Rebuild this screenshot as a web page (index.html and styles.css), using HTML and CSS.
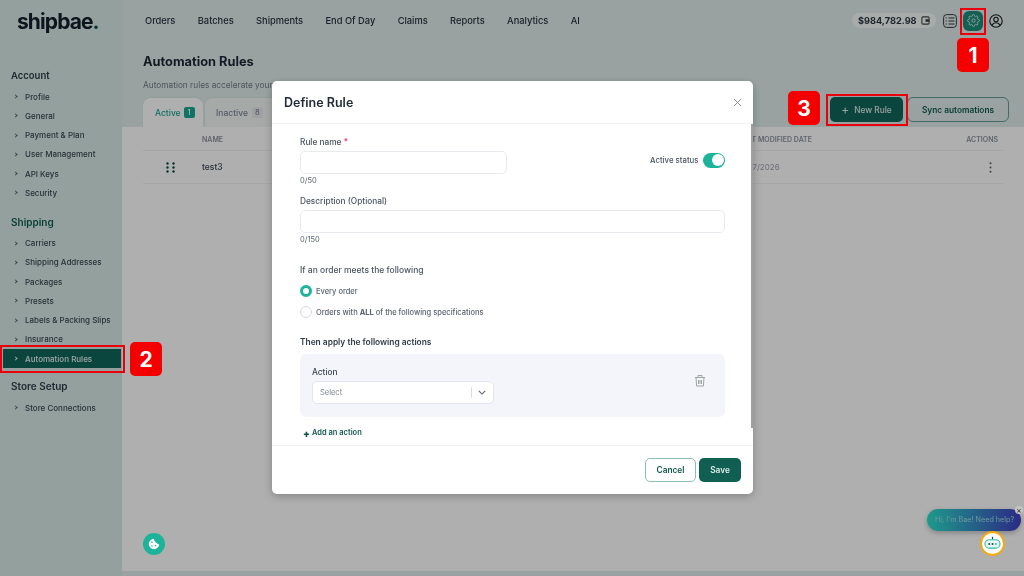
FILE: index.html
```html
<!DOCTYPE html>
<html lang="en">
<head>
<meta charset="utf-8">
<title>Automation Rules</title>
<link rel="stylesheet" href="styles.css">
</head>
<body>
<div class="app">
  <aside class="sidebar">
    <div class="logo">shipbae<span class="logo-dot">.</span></div>
    <h3 class="side-head">Account</h3>
    <ul class="side-list">
      <li><i class="chev"></i>Profile</li>
      <li><i class="chev"></i>General</li>
      <li><i class="chev"></i>Payment &amp; Plan</li>
      <li><i class="chev"></i>User Management</li>
      <li><i class="chev"></i>API Keys</li>
      <li><i class="chev"></i>Security</li>
    </ul>
    <h3 class="side-head side-head-green">Shipping</h3>
    <ul class="side-list side-list-wide">
      <li><i class="chev"></i>Carriers</li>
      <li><i class="chev"></i>Shipping Addresses</li>
      <li><i class="chev"></i>Packages</li>
      <li><i class="chev"></i>Presets</li>
      <li><i class="chev"></i>Labels &amp; Packing Slips</li>
      <li><i class="chev"></i>Insurance</li>
      <li class="active"><i class="chev"></i>Automation Rules</li>
    </ul>
    <h3 class="side-head side-head-store">Store Setup</h3>
    <ul class="side-list side-list-wide">
      <li><i class="chev"></i>Store Connections</li>
    </ul>
  </aside>
  <main class="main">
    <header class="topbar">
      <nav class="nav">
        <a>Orders</a><a>Batches</a><a>Shipments</a><a>End Of Day</a><a>Claims</a><a>Reports</a><a>Analytics</a><a>AI</a>
      </nav>
      <div class="top-right">
        <div class="balance">$984,782.98
          <svg class="wallet" viewBox="0 0 10 10" width="9" height="9"><rect x="1" y="1" width="8" height="8" rx="1.2" fill="none" stroke="#3b4444" stroke-width="1.2"/><rect x="5" y="3.5" width="4" height="3" fill="#3b4444"/></svg>
        </div>
        <svg class="list-ic" viewBox="0 0 14 14" width="14" height="14"><rect x=".6" y=".6" width="12.8" height="12.8" rx="3" fill="none" stroke="#2c3a3a"/><path d="M5.5 4h6M5.5 7h6M5.5 10h6" stroke="#2c3a3a" stroke-width="1"/><path d="M2.5 4h1.500M2.500 7h1.500M2.500 10h1.500" stroke="#b33" stroke-width="1"/></svg>
        <div class="gear-btn">
          <svg viewBox="0 0 24 24" width="13" height="13" fill="none" stroke="#d5e6e2" stroke-width="1.800" stroke-linejoin="round"><circle cx="12" cy="12" r="3"/><path d="M19.400 15a1.650 1.650 0 0 0 .33 1.820l.06.06a2 2 0 1 1-2.830 2.830l-.06-.06a1.650 1.650 0 0 0-2.800 1.170V21a2 2 0 1 1-4 0v-.09a1.650 1.650 0 0 0-2.880-1.100l-.06.06a2 2 0 1 1-2.830-2.830l.06-.06a1.650 1.650 0 0 0-1.170-2.800H3a2 2 0 1 1 0-4h.09a1.650 1.650 0 0 0 1.100-2.880l-.06-.06a2 2 0 1 1 2.830-2.830l.06.06A1.650 1.650 0 0 0 9.800 3.300V3a2 2 0 1 1 4 0v.09a1.650 1.650 0 0 0 2.800 1.170l.06-.06a2 2 0 1 1 2.830 2.830l-.06.06a1.650 1.650 0 0 0 1.170 2.800H21a2 2 0 1 1 0 4h-.09a1.650 1.650 0 0 0-1.510 1z"/></svg>
        </div>
        <svg class="user-ic" viewBox="0 0 14 14" width="14" height="14" fill="none" stroke="#141c1c" stroke-width="1.100"><circle cx="7" cy="7" r="6.200"/><circle cx="7" cy="5.500" r="2.200"/><path d="M3 11.500c.8-2 2.300-2.700 4-2.700s3.200.7 4 2.700"/></svg>
      </div>
    </header>
    <section class="page-head">
      <h1 class="title">Automation Rules</h1>
      <p class="subtitle">Automation rules accelerate your shipping workflow</p>
      <div class="tabs-row">
        <div class="tabs">
          <div class="tab tab-on">Active <span class="badge badge-on">1</span></div>
          <div class="tab">Inactive <span class="badge">8</span></div>
        </div>
        <div class="head-actions">
          <button class="btn-new"><span class="plus">+</span>New Rule</button>
          <button class="btn-sync">Sync automations</button>
        </div>
      </div>
    </section>
    <section class="table-area">
      <div class="row row-head">
        <span class="col-drag"></span>
        <span class="col-name">NAME</span>
        <span class="col-date">LAST MODIFIED DATE</span>
        <span class="col-act">ACTIONS</span>
      </div>
      <div class="row row-body">
        <span class="col-drag"><svg viewBox="0 0 9 11" width="9" height="11" fill="#0e4a44"><circle cx="1.500" cy="1.500" r="1.200"/><circle cx="7.500" cy="1.500" r="1.200"/><circle cx="1.500" cy="5.500" r="1.200"/><circle cx="7.500" cy="5.500" r="1.200"/><circle cx="1.500" cy="9.500" r="1.200"/><circle cx="7.500" cy="9.500" r="1.200"/></svg></span>
        <span class="col-name col-test">test3</span>
        <span class="col-date col-val">01/17/2026</span>
        <span class="col-act"><svg viewBox="0 0 3 11" width="3" height="11" fill="#5a6262"><circle cx="1.500" cy="1.300" r="1"/><circle cx="1.500" cy="5.500" r="1"/><circle cx="1.500" cy="9.700" r="1"/></svg></span>
      </div>
    </section>
  </main>
</div>

<div class="backdrop">
  <div class="modal">
    <div class="modal-head">
      <h2 class="modal-title">Define Rule</h2>
      <svg class="close" viewBox="0 0 10 10" width="9" height="9" fill="none" stroke="#7d8584" stroke-width="1"><path d="M1 1l8 8M9 1l-8 8"/></svg>
    </div>
    <div class="modal-body">
      <div class="name-row">
        <div class="name-col">
          <label class="lbl">Rule name <span class="req">*</span></label>
          <div class="input"></div>
          <div class="count">0/50</div>
        </div>
        <div class="status">
          <span class="lbl lbl-status">Active status</span>
          <span class="toggle"><i class="knob"></i></span>
        </div>
      </div>
      <div class="desc">
        <label class="lbl">Description (Optional)</label>
        <div class="input"></div>
        <div class="count">0/150</div>
      </div>
      <div class="q">If an order meets the following</div>
      <div class="radio-row radio-first"><i class="radio radio-on"></i>Every order</div>
      <div class="radio-row"><i class="radio"></i><span>Orders with <b>ALL</b> of the following specifications</span></div>
      <div class="q q-then">Then apply the following actions</div>
      <div class="card">
        <div class="card-left">
          <label class="lbl lbl-action">Action</label>
          <div class="select"><span class="sel-text">Select</span><i class="sel-sep"></i>
            <svg viewBox="0 0 10 6" width="8" height="5" fill="none" stroke="#56606a" stroke-width="1.300"><path d="M1 1l4 4 4-4"/></svg>
          </div>
        </div>
        <svg class="trash" viewBox="0 0 12 13" width="12" height="13" fill="none" stroke="#a0a5a5" stroke-width="1"><path d="M1 3.500h10M4 3V1.500h4V3M2 3.500l.6 8.500h6.800l.6-8.500M4.500 6v4M6 6v4M7.500 6v4"/></svg>
      </div>
      <div class="add"><b class="add-plus">+</b>Add an action</div>
    </div>
    <div class="modal-foot">
      <button class="btn-cancel">Cancel</button>
      <button class="btn-save">Save</button>
    </div>
    <div class="scroll-track"></div>
  </div>
</div>

<div class="mark mark-gear"></div>
<div class="mark mark-side"></div>
<div class="mark mark-new"></div>
<div class="num num-1">1</div>
<div class="num num-2">2</div>
<div class="num num-3">3</div>

<div class="cookie">
  <svg viewBox="0 0 12 12" width="12" height="12"><path d="M6 .8a5.200 5.200 0 1 0 5.200 5.400c-1 .2-1.900-.3-2.100-1.200-1 .1-1.900-.6-1.900-1.700C6.200 3 5.700 1.800 6 .8z" fill="#fff"/><circle cx="4" cy="4.200" r=".8" fill="#1bb39a"/><circle cx="7.500" cy="7.500" r=".8" fill="#1bb39a"/><circle cx="4" cy="8" r=".7" fill="#1bb39a"/></svg>
</div>
<div class="chat">Hi, I'm Bae! Need help?<span class="chat-x">×</span></div>
<div class="bot">
  <svg viewBox="0 0 20 18" width="17" height="15" fill="none"><path d="M10 1v3" stroke="#0e4a44" stroke-width="1.500"/><rect x="1" y="4.500" width="18" height="10" rx="5" stroke="#35b8a0" stroke-width="1.300" fill="#e6f6f3"/><circle cx="6" cy="9.500" r="1.200" fill="#0e4a44"/><circle cx="10" cy="9.500" r="1.200" fill="#0e4a44"/><circle cx="14" cy="9.500" r="1.200" fill="#35b8a0"/></svg>
</div>
</body>
</html>
```
FILE: styles.css
```css
* { box-sizing: border-box; }
html, body { margin: 0; height: 100%; overflow: hidden; }
body {
  font-family: "Inter", "Open Sans", sans-serif;
  background: #dbe9e6;
  color: #2a3440;
  font-size: 8.500px;
  filter: blur(.35px);
}
h1, h2, h3, p, ul { margin: 0; padding: 0; }
ul { list-style: none; }
button { font-family: inherit; cursor: pointer; }

.app { display: flex; width: 1024px; height: 576px; }

/* Sidebar */
.sidebar { width: 122px; flex: none; background: #d4e6e2; display: flex; flex-direction: column; }
.logo {
  font-family: "Inter", sans-serif;
  font-weight: 700; font-size: 21px; letter-spacing: -.9px;
  color: #141d2b; height: 44px; line-height: 44px; padding-left: 17px;
}
.logo-dot { color: #0e4a44; }
.side-head { font-size: 9.500px; font-weight: 600; color: #2e3a48; padding-left: 11px; line-height: 14px; margin-top: 25px; }
.side-head-green { color: #0e5a50; margin-top: 12px; font-size: 10px; }
.side-head-store { margin-top: 11px; font-size: 10px; }
.side-list { margin-top: 4px; }
.side-list-wide { margin-top: 5px; }
.side-list li { display: flex; align-items: center; height: 19.250px; padding-left: 14px; font-weight: 500; font-size: 8px; color: #3a4554; }
.chev { width: 3px; height: 3px; border-top: 1px solid #56606a; border-right: 1px solid #56606a; transform: rotate(45deg); margin-right: 8px; flex: none; }
.side-list li.active { background: #0f6459; color: #e4eeec; margin: 0 1px 0 3px; padding-left: 11px; }
.active .chev { border-color: #e4eeec; }

/* Main */
.main { flex: 1; min-width: 0; display: flex; flex-direction: column; }
.topbar { height: 41px; flex: none; display: flex; align-items: center; justify-content: space-between; padding: 0 21px 0 23px; }
.nav { display: flex; gap: 22.400px; }
.nav a { font-size: 9.300px; font-weight: 500; color: #243040; }
.top-right { display: flex; align-items: center; }
.balance {
  display: flex; align-items: center; justify-content: space-between;
  width: 84px; height: 15px; padding: 0 6px; border-radius: 8px;
  background: #eff6f5; font-weight: 700; font-size: 9.200px; color: #2a3440;
}
.list-ic { margin-left: 7px; }
.gear-btn { width: 20px; height: 20px; margin-left: 6px; border-radius: 6px; background: #1a8879; display: flex; align-items: center; justify-content: center; }
.user-ic { margin-left: 6px; }

.page-head { flex: none; height: 86px; padding: 13px 15px 0 21px; }
.title { font-size: 12.800px; font-weight: 700; color: #1c2636; line-height: 16px; }
.subtitle { font-size: 8.300px; color: #6e7a88; margin-top: 9px; line-height: 12px; }
.tabs-row { display: flex; justify-content: space-between; }
.tabs { display: flex; gap: 2px; padding-top: 7px; }
.tab { width: 60px; height: 29px; padding-left: 12px; border-radius: 8px 8px 0 0; background: #edf4f3; display: flex; align-items: center; gap: 3px; font-weight: 500; color: #7a8494; box-shadow: 0 -1px 3px rgba(0,0,0,.06); }
.tab + .tab { width: 72px; padding-left: 11px; gap: 4px; }
.tab-on { background: #fbfbfb; color: #14a58e; }
.badge { min-width: 11px; height: 11px; border-radius: 2px; background: #e3e6e8; font-size: 7.500px; display: inline-flex; align-items: center; justify-content: center; padding: 0 3px; }
.badge-on { background: #14a58e; color: #fff; }
.head-actions { display: flex; align-items: flex-start; gap: 4px; margin-top: 6px; }
.btn-new { width: 73px; height: 25px; border: 0; border-radius: 5px; background: #0f6459; color: #d9e6e3; font-size: 8.300px; font-weight: 500; display: flex; align-items: center; justify-content: center; }
.plus { font-size: 12px; font-weight: 400; margin-right: 5px; line-height: 1; }
.btn-sync { width: 102px; height: 25px; border-radius: 6px; border: 1px solid #5f9a90; background: transparent; color: #12564d; font-size: 8.300px; font-weight: 600; }

.table-area { flex: none; height: 444px; background: #fbfbfb; padding: 0 21px; }
.row { display: flex; align-items: center; border-bottom: 1px solid #ececec; }
.row-head { height: 24px; padding-top: 1px; font-size: 7px; font-weight: 600; color: #8a8f9c; }
.row-body { height: 33px; }
.col-drag { width: 59px; display: flex; justify-content: center; padding-right: 4px; }
.col-name { width: 484px; }
.col-test { font-weight: 500; color: #3a4554; font-size: 8.500px; }
.col-date { flex: 1; padding-left: 52px; }
.col-val { color: #9aa0aa; font-size: 8px; }
.col-act { width: 40px; display: flex; justify-content: flex-end; padding-right: 5px; }
.row-body .col-act { padding-right: 11px; }

/* Modal */
.backdrop { position: fixed; inset: 0; background: rgba(0,0,0,.3); }
.modal {
  position: absolute; left: 272px; top: 81px; width: 481px; height: 413px;
  background: #fff; border-radius: 5px; box-shadow: 0 2px 8px rgba(0,0,0,.25);
  display: flex; flex-direction: column; overflow: hidden;
}
.scroll-track { position: absolute; right: 0; top: 43px; width: 2px; height: 304px; background: #a0a0a0; }
.modal-head { height: 43px; flex: none; display: flex; align-items: center; justify-content: space-between; padding: 0 11px 0 12px; border-bottom: 1px solid #f2f2f4; }
.modal-title { font-size: 12.500px; font-weight: 600; color: #1f2937; }
.modal-body { flex: 1; min-height: 0; overflow: hidden; padding: 12px 28px 0 28px; color: #3a4554; }
.lbl { display: block; font-size: 8.300px; font-weight: 500; color: #4a5462; line-height: 12px; }
.req { color: #e5355f; }
.name-row { display: flex; justify-content: space-between; }
.name-col { width: 207px; }
.input { height: 23px; border: 1px solid #e8eaf2; border-radius: 5px; background: #fff; margin-top: 3px; }
.count { font-size: 7.500px; color: #5a6470; line-height: 12px; margin-top: 1px; }
.status { display: flex; align-items: center; gap: 5px; height: 16px; margin-top: 16px; }
.lbl-status { width: 48px; white-space: nowrap; font-size: 7.800px; }
.toggle { width: 22px; height: 15px; border-radius: 8px; background: #1bb39a; display: flex; align-items: center; justify-content: flex-end; padding-right: 1px; }
.knob { width: 12px; height: 12px; border-radius: 50%; background: #fff; }
.desc { margin-top: 8px; }
.q { font-size: 8.500px; font-weight: 500; color: #4a5462; line-height: 12px; margin-top: 18px; }
.q-then { margin-top: 18px; color: #2f3a48; font-weight: 600; font-size: 8.400px; }
.radio-row { display: flex; align-items: center; gap: 4px; height: 12px; margin-top: 9px; font-size: 7.500px; font-weight: 500; color: #5a6470; }
.radio-first { margin-top: 9px; }
.radio { width: 12px; height: 12px; border-radius: 50%; border: 1px solid #d8dade; flex: none; }
.radio-on { border: 3.500px solid #1bb39a; }
.card { height: 63px; margin-top: 6px; background: #f4f5fb; border-radius: 6px; padding: 12px 19px 0 12px; display: flex; justify-content: space-between; align-items: flex-start; }
.trash { margin-top: 8px; }
.lbl-action { color: #3a4554; }
.select { width: 182px; height: 23px; margin-top: 3px; border: 1px solid #e2e5f0; border-radius: 5px; background: #fff; display: flex; align-items: center; padding: 0 7px; }
.sel-text { flex: 1; font-size: 7.500px; color: #7d8794; }
.sel-sep { width: 1px; height: 11px; background: #d8dbe0; margin-right: 6px; }
.add { margin-top: 10px; padding-left: 3px; font-size: 7.500px; font-weight: 600; color: #12564d; line-height: 12px; display: flex; align-items: center; }
.add-plus { font-size: 10px; margin-right: 2px; line-height: 10px; }
.modal-foot { height: 49px; flex: none; border-top: 1px solid #f2f2f4; display: flex; justify-content: flex-end; align-items: flex-start; gap: 3px; padding: 12px 12px 0 0; }
.btn-cancel { width: 51px; height: 24px; border-radius: 5px; border: 1px solid #8dbdb5; background: #fff; color: #12564d; font-size: 8.300px; font-weight: 600; }
.btn-save { width: 42px; height: 24px; border-radius: 5px; border: 0; background: #115e53; color: #dfeeea; font-size: 8.300px; font-weight: 600; }

/* Annotations */
.mark { position: fixed; border: 2.500px solid #e9000b; }
.mark-gear { left: 960px; top: 8px; width: 26px; height: 27px; }
.mark-side { left: 0; top: 345px; width: 125px; height: 28px; }
.mark-new { left: 826px; top: 94px; width: 82px; height: 32px; }
.num { position: fixed; width: 32px; height: 34px; border-radius: 5px; background: #f50000; color: #fff; font-size: 21px; font-weight: 700; display: flex; align-items: center; justify-content: center; }
.num-1 { left: 957px; top: 38px; }
.num-2 { left: 130px; top: 342px; }
.num-3 { left: 788px; top: 91px; }

/* Floating widgets */
.cookie { position: fixed; left: 143px; top: 533px; width: 22px; height: 22px; border-radius: 50%; background: #1bb39a; display: flex; align-items: center; justify-content: center; }
.chat { position: fixed; left: 927px; top: 509px; width: 94px; height: 22px; border-radius: 11px; background: linear-gradient(90deg, #1d9a8b, #2b2a85); color: #6f9a9d; font-size: 7.200px; line-height: 22px; padding-left: 8px; white-space: nowrap; box-shadow: 0 2px 5px rgba(0,0,0,.25); }
.chat-x { position: absolute; right: -2px; top: -3px; width: 8px; height: 8px; border-radius: 50%; background: #c4c4c4; color: #222; font-size: 8px; line-height: 8px; text-align: center; }
.bot { position: fixed; left: 980px; top: 531px; width: 25px; height: 25px; border-radius: 50%; background: #fff; border: 2px solid #f5a90f; display: flex; align-items: center; justify-content: center; }
```
